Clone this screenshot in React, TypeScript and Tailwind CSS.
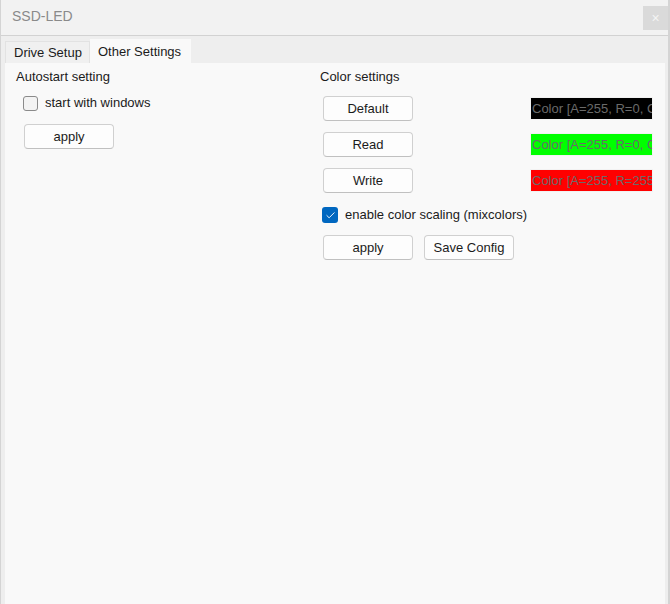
import { Check } from "lucide-react";

const font = { fontFamily: '"Liberation Sans", Arial, sans-serif' };

function Button({ label, className = "" }: { label: string; className?: string }) {
  return (
    <div
      className={`flex h-[25px] w-[90px] items-center justify-center rounded-[4px] border border-[#d0d0d0] border-b-[#c0c0c0] bg-[#fdfdfd] text-[13px] text-[#1b1b1b] ${className}`}
    >
      {label}
    </div>
  );
}

function CheckBox({ checked, label }: { checked?: boolean; label: string }) {
  return (
    <div className="flex h-[16px] items-center">
      {checked ? (
        <div className="flex size-[16px] items-center justify-center rounded-[3px] bg-[#0067c0]">
          <Check className="size-[11px] text-white" strokeWidth={2} />
        </div>
      ) : (
        <div className="size-[15px] rounded-[3px] border border-[#8a8a8a] bg-[#f3f3f3]" />
      )}
      <span className="ml-[7px] text-[13px] leading-[16px] text-[#1b1b1b]">{label}</span>
    </div>
  );
}

function ColorBox({ bg, text }: { bg: string; text: string }) {
  return (
    <div className="h-[23px] w-[123px] border border-[#f2f2f2] bg-white">
      <div
        className={`h-full w-full overflow-hidden whitespace-nowrap pl-[1px] text-[13px] leading-[21px] text-[#6a6a6a] ${bg}`}
      >
        {text}
      </div>
    </div>
  );
}

export default function App() {
  return (
    <div
      style={font}
      className="flex h-[604px] w-[670px] flex-col overflow-hidden border-l border-r-2 border-[#d4d4d4] bg-[#eeeeee]"
    >
      {/* title bar */}
      <div className="flex h-[36px] shrink-0 items-start justify-between border-b border-[#d2d2d2] bg-[#f2f2f2]">
        <span className="ml-[11px] mt-[7px] text-[14px] leading-[18px] text-[#8a8a8a]">SSD-LED</span>
        <div className="mt-[6px] flex h-[24px] w-[25px] items-center justify-center bg-[#dadada] text-[14px] text-[#f4f4f4]">
          ×
        </div>
      </div>

      {/* tabs */}
      <div className="flex flex-1 flex-col pl-[4px] pr-[3px]">
        <div className="flex h-[27px] shrink-0 items-end">
          <div className="flex h-[22px] w-[85px] items-center border-x border-t border-[#e2e2e2] bg-[#f0f0f0] pl-[8px] text-[13px] text-[#1b1b1b]">
            Drive Setup
          </div>
          <div className="flex h-[24px] w-[101px] items-start bg-[#f9f9f9] pl-[8px] pt-[3px] text-[13px] text-[#1b1b1b]">
            Other Settings
          </div>
        </div>

        <div className="flex flex-1 bg-[#f9f9f9]">
          {/* left column */}
          <div className="flex w-[315px] flex-col pl-[11px] pt-[6px]">
            <span className="h-[16px] text-[13px] leading-[16px] text-[#1b1b1b]">Autostart setting</span>
            <div className="ml-[7px] mt-[10px]">
              <CheckBox label="start with windows" />
            </div>
            <Button label="apply" className="ml-[8px] mt-[13px]" />
          </div>

          {/* right column */}
          <div className="flex flex-col pt-[6px]">
            <span className="h-[16px] text-[13px] leading-[16px] text-[#1b1b1b]">Color settings</span>
            <div className="ml-[3px] mt-[11px] flex items-center gap-[117px]">
              <Button label="Default" />
              <ColorBox bg="bg-black" text="Color [A=255, R=0, G=0, B=0]" />
            </div>
            <div className="ml-[3px] mt-[11px] flex items-center gap-[117px]">
              <Button label="Read" />
              <ColorBox bg="bg-[#00ff00]" text="Color [A=255, R=0, G=255, B=0]" />
            </div>
            <div className="ml-[3px] mt-[11px] flex items-center gap-[117px]">
              <Button label="Write" />
              <ColorBox bg="bg-[#ff0000]" text="Color [A=255, R=255, G=0, B=0]" />
            </div>
            <div className="ml-[2px] mt-[14px]">
              <CheckBox checked label="enable color scaling (mixcolors)" />
            </div>
            <div className="ml-[3px] mt-[12px] flex gap-[11px]">
              <Button label="apply" />
              <Button label="Save Config" />
            </div>
          </div>
        </div>
      </div>
    </div>
  );
}
